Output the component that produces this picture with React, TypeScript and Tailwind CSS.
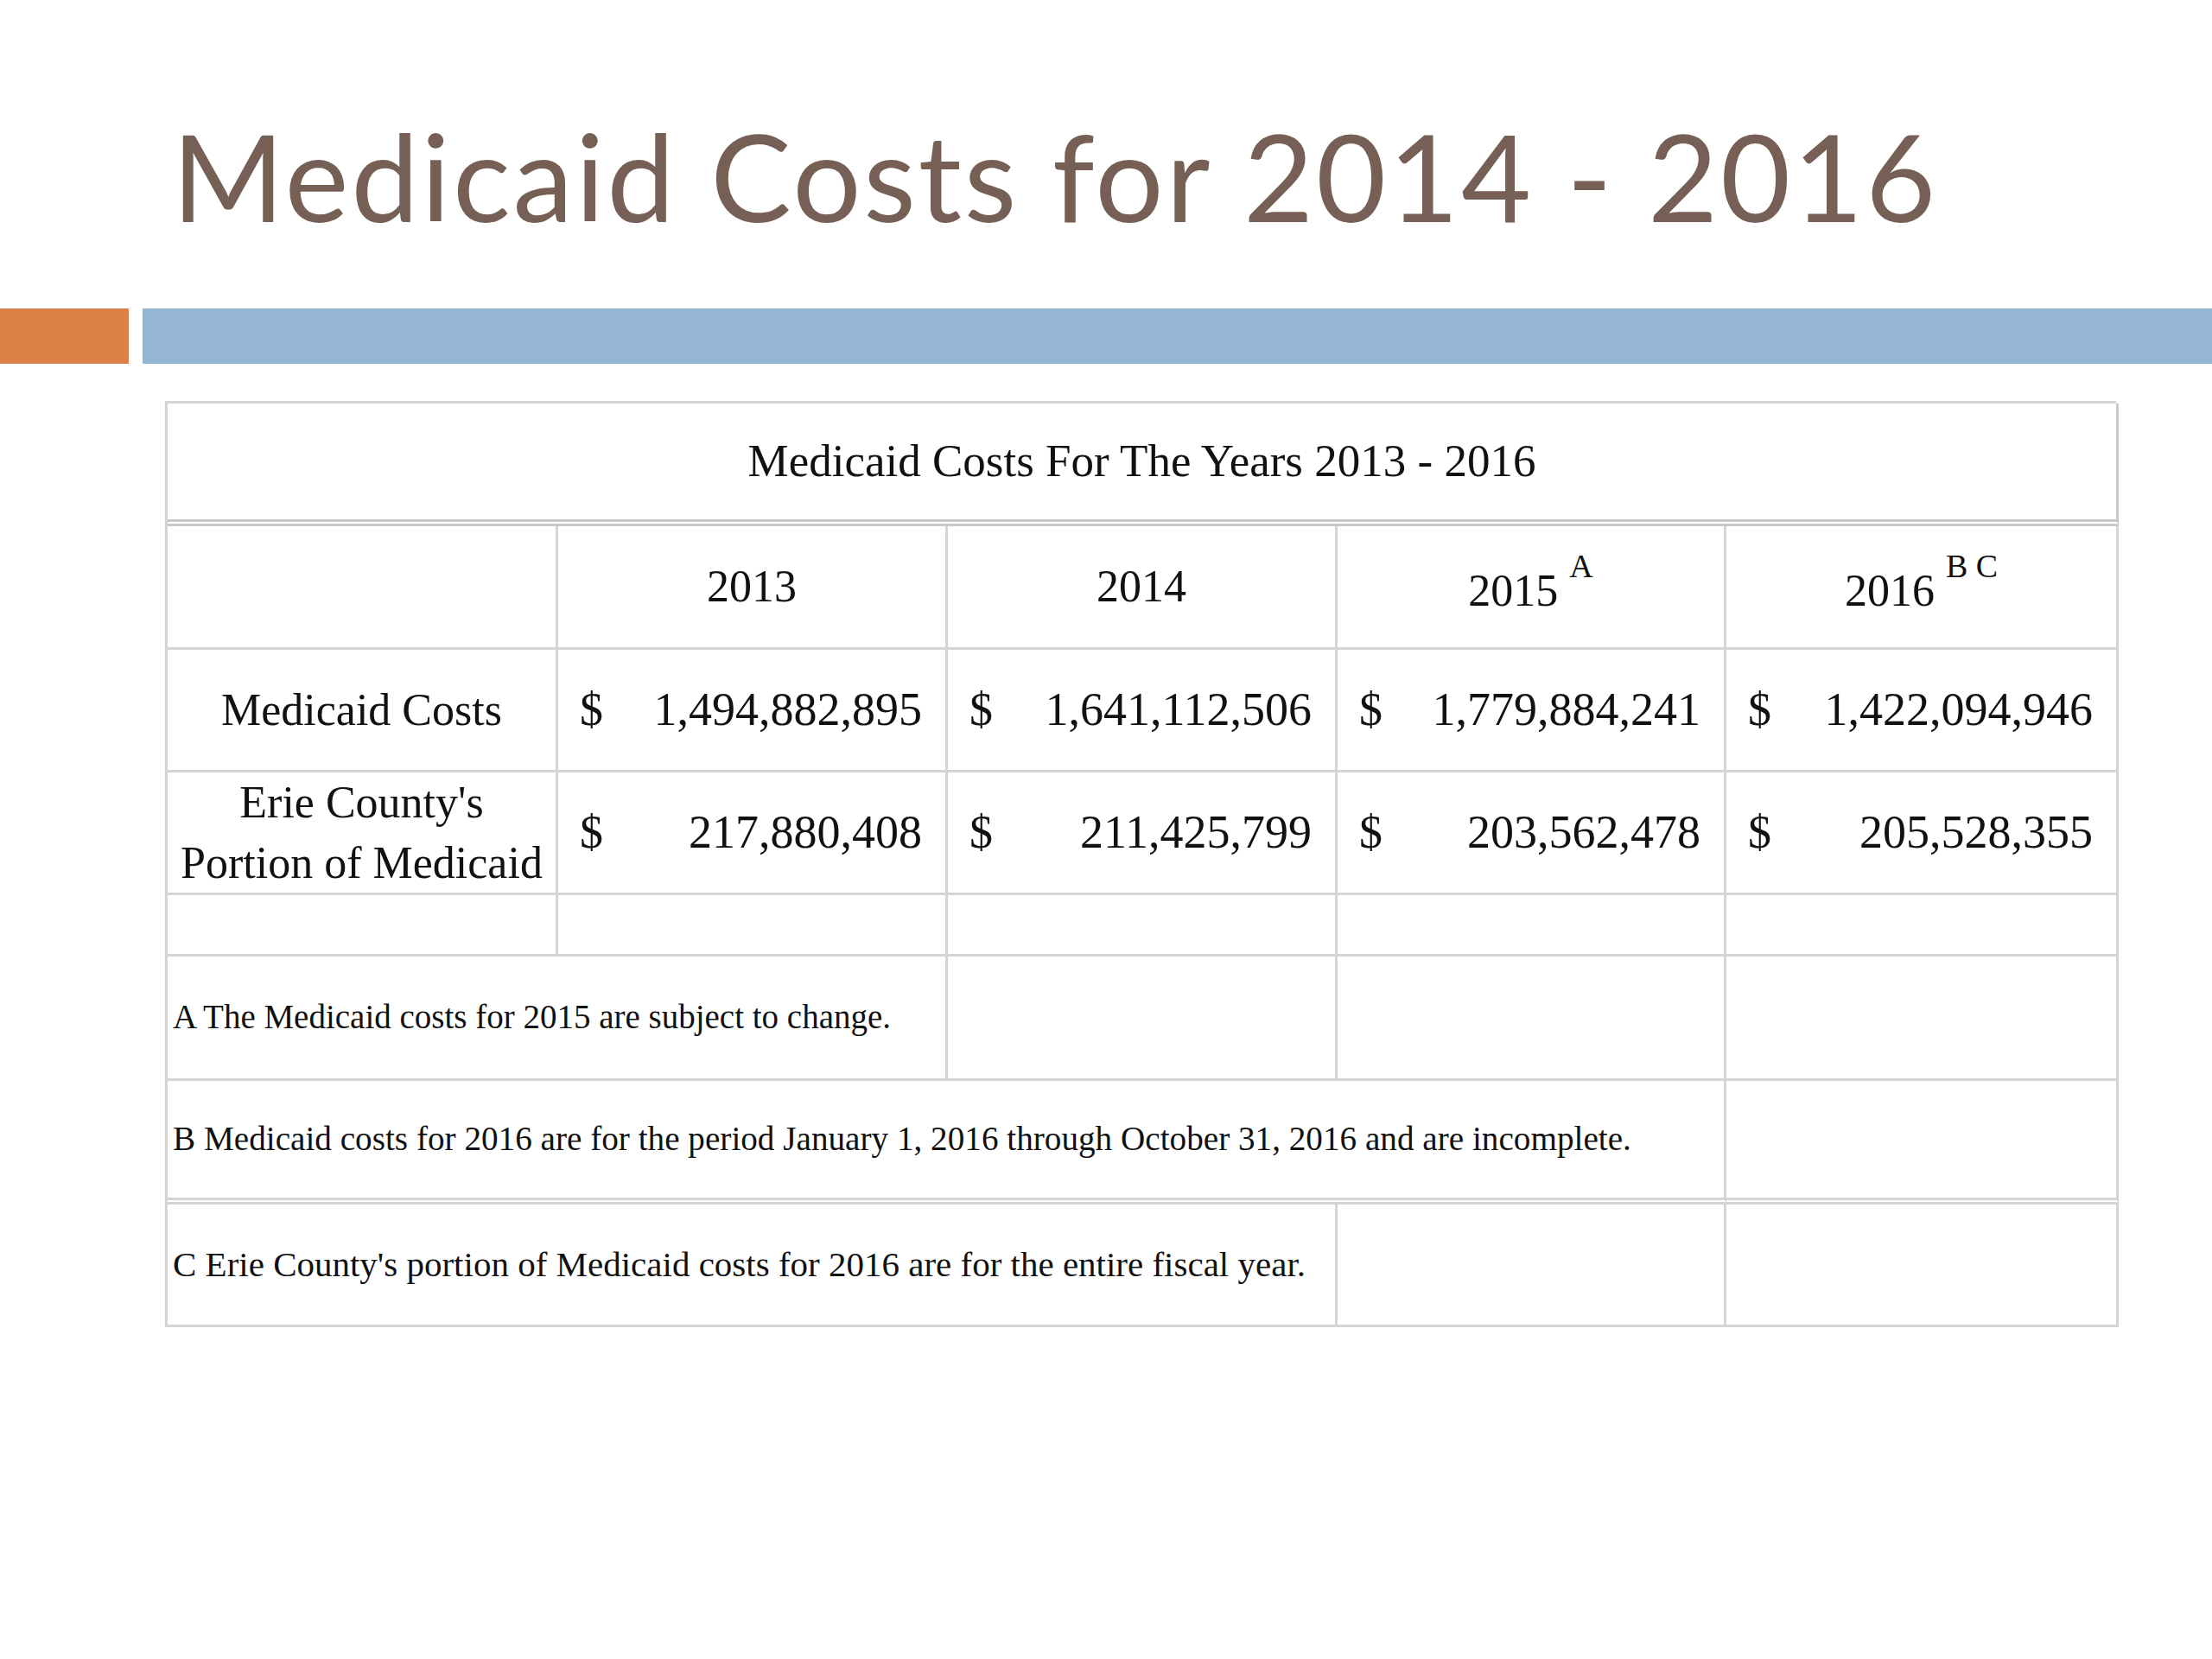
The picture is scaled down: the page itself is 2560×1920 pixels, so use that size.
const serif = "font-['Liberation_Serif','Times_New_Roman',serif]";

const line = "border-[#d4d4d4]";

function Cell({
  children,
  className = "",
}: {
  children?: React.ReactNode;
  className?: string;
}) {
  return (
    <div className={`border-r-[3px] border-b-[3px] ${line} flex items-center ${className}`}>
      {children}
    </div>
  );
}

function Money({ v }: { v: string }) {
  return (
    <Cell className="justify-between pl-[25px] pr-[27px] text-[54px]">
      <span>$</span>
      <span>{v}</span>
    </Cell>
  );
}

const medicaid = ["1,494,882,895", "1,641,112,506", "1,779,884,241", "1,422,094,946"];
const erie = ["217,880,408", "211,425,799", "203,562,478", "205,528,355"];

export default function App() {
  return (
    <div className="w-[2560px] h-[1920px] bg-white overflow-hidden">
      <div className="h-[357px] pt-[133px] pl-[199px]">
        <h1 className="font-['Lato',sans-serif] text-[140px] leading-[140px] text-[#765f55] tracking-[2.8px]">
          Medicaid Costs for 2014 - 2016
        </h1>
      </div>

      <div className="flex h-[64px] gap-[16px]">
        <div className="w-[149px] bg-[#dd8047]" />
        <div className="flex-1 bg-[#94b6d2]" />
      </div>

      <div
        className={`mt-[43px] ml-[191px] w-[2258px] grid grid-cols-[452px_451px_451px_450px_454px] grid-rows-[142px_143px_142px_142px_71px_144px_143px_142px] border-l-[3px] border-t-[3px] ${line} ${serif} text-[#111]`}
      >
        {/* title */}
        <div className="col-span-5 border-r-[3px] border-b-[8px] [border-bottom-style:double] border-[#c8c8c8] flex items-center justify-center text-[53px]">
          Medicaid Costs For The Years 2013 - 2016
        </div>

        {/* years */}
        <Cell className="border-b-4 border-[#cacaca]" />
        <Cell className="justify-center text-[52px] border-b-4 border-[#cacaca]">2013</Cell>
        <Cell className="justify-center text-[52px] border-b-4 border-[#cacaca]">2014</Cell>
        <Cell className="justify-center text-[52px] border-b-4 border-[#cacaca]">
          <span className="pt-[10px]">
            2015 <sup className="text-[38px] align-[14px]">A</sup>
          </span>
        </Cell>
        <Cell className="justify-center text-[52px] border-b-4 border-[#cacaca]">
          <span className="pt-[10px]">
            2016 <sup className="text-[38px] align-[14px]">B C</sup>
          </span>
        </Cell>

        {/* medicaid costs */}
        <Cell className="justify-center text-[52px]">Medicaid Costs</Cell>
        {medicaid.map((v) => (
          <Money key={v} v={v} />
        ))}

        {/* erie */}
        <Cell className="justify-center text-center text-[52px] leading-[70px]">
          <span>
            Erie County's
            <br />
            Portion of Medicaid
          </span>
        </Cell>
        {erie.map((v) => (
          <Money key={v} v={v} />
        ))}

        {/* empty */}
        <Cell className="border-b-4 border-[#cacaca]" />
        <Cell className="border-b-4 border-[#cacaca]" />
        <Cell className="border-b-4 border-[#cacaca]" />
        <Cell className="border-b-4 border-[#cacaca]" />
        <Cell className="border-b-4 border-[#cacaca]" />

        {/* footnotes */}
        <Cell className="col-span-2 pl-[6px] text-[39px]">
          A The Medicaid costs for 2015 are subject to change.
        </Cell>
        <Cell />
        <Cell />
        <Cell />

        <Cell className="col-span-4 pl-[6px] text-[39.2px] border-b-[8px] [border-bottom-style:double] border-[#c8c8c8]">
          B Medicaid costs for 2016 are for the period January 1, 2016 through October 31, 2016 and are incomplete.
        </Cell>
        <Cell className="border-b-[8px] [border-bottom-style:double] border-[#c8c8c8]" />

        <Cell className="col-span-3 pl-[6px] text-[41px]">
          C Erie County's portion of Medicaid costs for 2016 are for the entire fiscal year.
        </Cell>
        <Cell />
        <Cell />
      </div>
    </div>
  );
}
